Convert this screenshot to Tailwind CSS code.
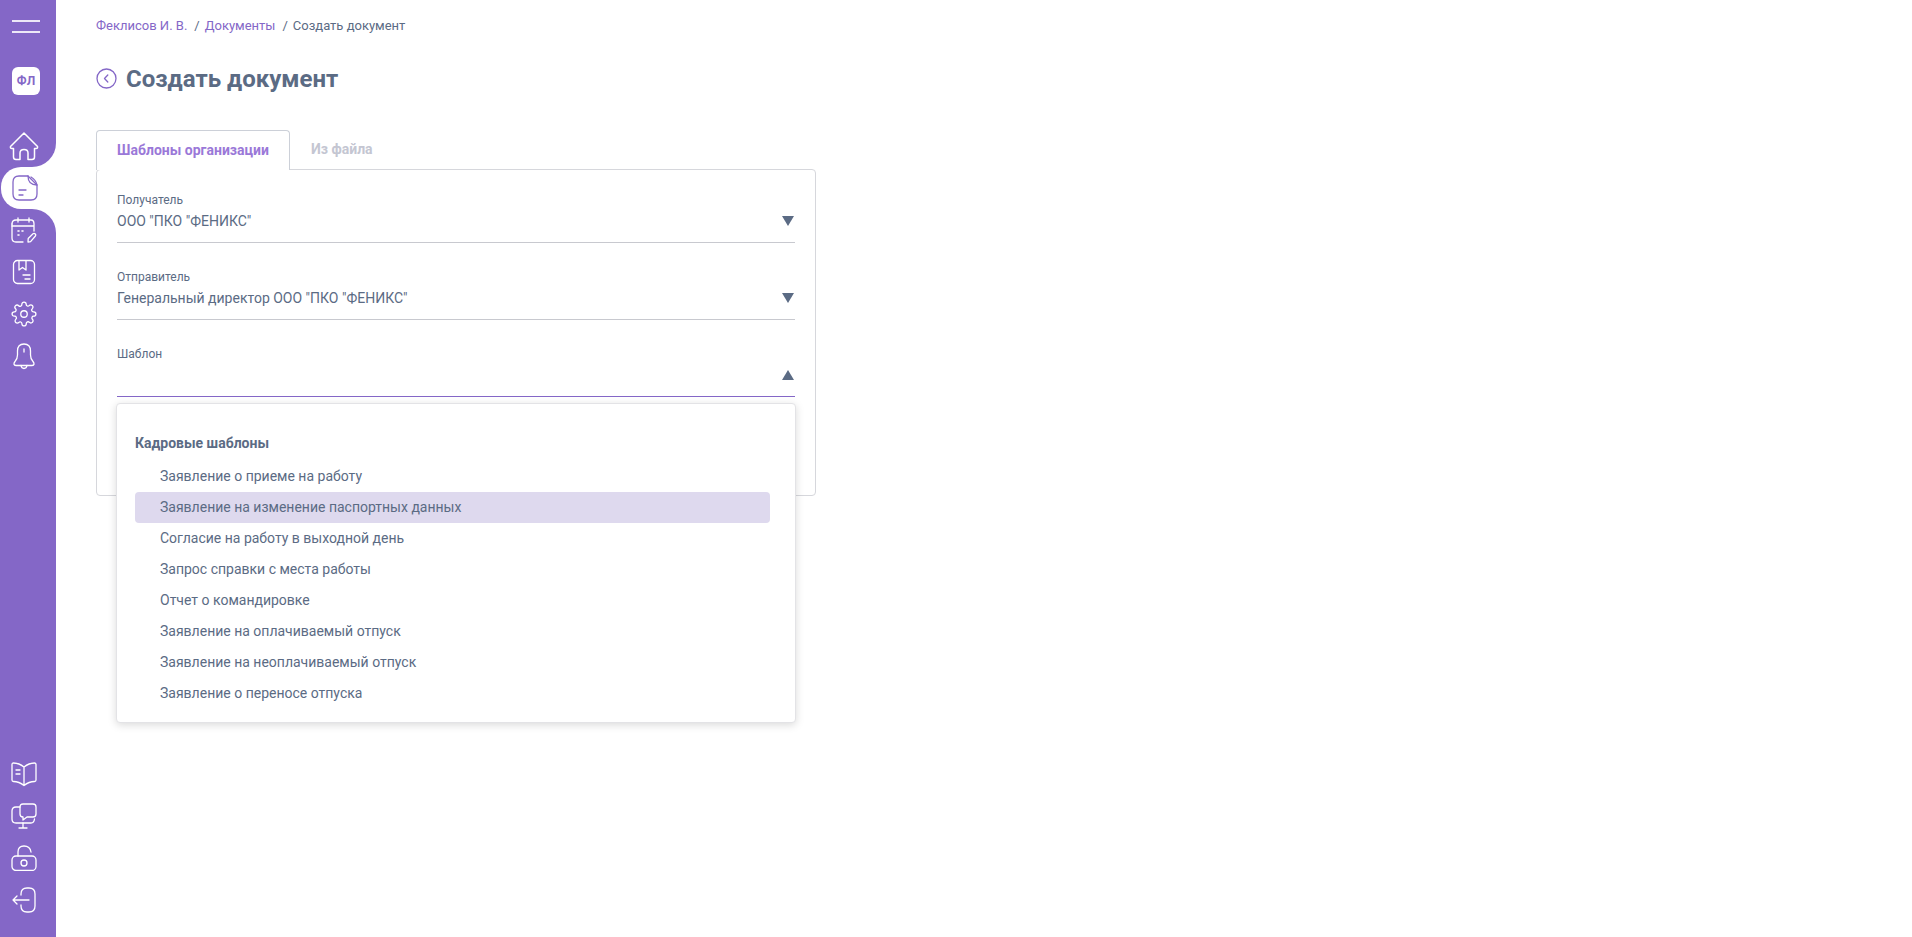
<!DOCTYPE html>
<html lang="ru">

<head>
    <meta charset="UTF-8">
    <meta name="viewport" content="width=device-width, initial-scale=1.0">
    <title>Создать документ</title>
    <script src="https://cdn.jsdelivr.net/npm/@tailwindcss/browser@4"></script>
</head>

<body class="bg-white h-screen overflow-hidden flex font-['Roboto',sans-serif] text-[#5b6b84]">
    <!-- Sidebar -->
    <aside class="w-14 shrink-0 h-full flex flex-col bg-white text-white">
        <div class="bg-[#8467c7] h-[167px] rounded-br-[24px] flex flex-col items-center">
            <button class="mt-5 mr-1 w-7 flex flex-col gap-[9px]">
                <span class="block h-[2px] bg-white/85"></span>
                <span class="block h-[2px] bg-white/85"></span>
            </button>
            <div class="mt-[34px] mr-1 w-7 h-7 rounded-md bg-white text-[#8467c7] text-xs font-bold flex items-center justify-center">ФЛ</div>
            <div class="mt-[30px] mr-2 h-[42px] flex items-center justify-center">
                <svg width="30" height="30" viewBox="0 0 30 30" fill="none" stroke="currentColor" stroke-width="1.5" stroke-linejoin="round" stroke-linecap="round">
                    <path d="M15 2 L1.5 15.5 Q1 17.5 3 17.5 L4.5 17.5 L4.5 26 Q4.5 28.5 7 28.5 L11 28.5 L11 22 Q11 18.5 15 18.5 Q19 18.5 19 22 L19 28.5 L23 28.5 Q25.5 28.5 25.5 26 L25.5 17.5 L27 17.5 Q29 17.5 28.5 15.5 Z" />
                </svg>
            </div>
        </div>
        <div class="bg-[#8467c7] shrink-0">
            <div class="bg-white h-[42px] ml-px pr-[7px] rounded-l-[20px] flex items-center justify-center text-[#8467c7]">
                <svg width="26" height="26" viewBox="0 0 26 26" fill="none" stroke="currentColor" stroke-width="1.3" stroke-linecap="round" stroke-linejoin="round">
                    <path d="M16 1 H7 Q1 1 1 7 V19 Q1 25 7 25 H19 Q25 25 25 19 V10 Z" />
                    <path d="M16 1 Q16 10 25 10 M19 2 Q24 5 25 10" />
                    <path d="M7 15 H14 M7 20 H11" />
                </svg>
            </div>
        </div>
        <div class="bg-[#8467c7] flex-1 rounded-tr-[24px] flex flex-col items-center justify-between pb-4 pr-2">
            <div class="flex flex-col items-center">
                <div class="h-[42px] flex items-center justify-center">
                    <svg width="26" height="26" viewBox="0 0 26 26" fill="none" stroke="currentColor" stroke-width="1.3" stroke-linecap="round" stroke-linejoin="round">
                        <path d="M7 1 V5 M18 1 V5 M1 7 Q1 3 5 3 H20 Q23 3 23 7 V14 M1 9 H23" />
                        <path d="M1 7 V21 Q1 25 5 25 H12" />
                        <path d="M7 14 H8 M11 14 H12 M7 18 H8" stroke-width="1.6" />
                        <path d="M17 25 L17.2 21.5 L22 16.8 Q23.2 16 24.3 17 Q25.2 18.2 24.2 19.3 L19.6 24.6 Z" />
                    </svg>
                </div>
                <div class="h-[42px] flex items-center justify-center">
                    <svg width="24" height="26" viewBox="0 0 24 26" fill="none" stroke="currentColor" stroke-width="1.3" stroke-linecap="round" stroke-linejoin="round">
                        <rect x="1.5" y="1.5" width="21" height="23" rx="4" />
                        <path d="M7 2 V11 L10.5 8.5 L14 11 V2" />
                        <path d="M11 16 H18 M13 20 H18" />
                    </svg>
                </div>
                <div class="h-[42px] flex items-center justify-center">
                    <svg width="26" height="26" viewBox="0 0 24 24" fill="none" stroke="currentColor" stroke-width="1.2" stroke-linecap="round" stroke-linejoin="round">
                        <circle cx="12" cy="12" r="3" />
                        <path d="M19.4 15a1.65 1.65 0 0 0 .33 1.82l.06.06a2 2 0 1 1-2.83 2.83l-.06-.06a1.65 1.65 0 0 0-2.82 1.17V21a2 2 0 1 1-4 0v-.09a1.65 1.65 0 0 0-2.82-1.17l-.06.06a2 2 0 1 1-2.83-2.83l.06-.06A1.65 1.65 0 0 0 3.09 14H3a2 2 0 1 1 0-4h.09a1.65 1.65 0 0 0 1.17-2.82l-.06-.06a2 2 0 1 1 2.83-2.83l.06.06A1.65 1.65 0 0 0 10 3.09V3a2 2 0 1 1 4 0v.09a1.65 1.65 0 0 0 2.82 1.17l.06-.06a2 2 0 1 1 2.83 2.83l-.06.06A1.65 1.65 0 0 0 20.91 10H21a2 2 0 1 1 0 4h-.09a1.65 1.65 0 0 0-1.51 1z" />
                    </svg>
                </div>
                <div class="h-[42px] flex items-center justify-center">
                    <svg width="24" height="28" viewBox="0 0 24 28" fill="none" stroke="currentColor" stroke-width="1.3" stroke-linecap="round" stroke-linejoin="round">
                        <path d="M12 2 Q5.5 2 5.5 9 V13 Q5.5 17 3 19.5 Q0.5 23 4 23.5 H20 Q23.5 23 21 19.5 Q18.5 17 18.5 13 V9 Q18.5 2 12 2 Z" />
                        <path d="M12 7 V10 M9 23.5 Q9.5 26.5 12 26.5 Q14.5 26.5 15 23.5" />
                    </svg>
                </div>
            </div>
            <div class="flex flex-col items-center">
                <div class="h-[42px] flex items-center justify-center">
                    <svg width="26" height="26" viewBox="0 0 26 26" fill="none" stroke="currentColor" stroke-width="1.3" stroke-linecap="round" stroke-linejoin="round">
                        <path d="M13 6 Q8 2 2.5 2 Q1 2 1 3.5 V19 Q1 20.5 2.5 20.5 Q8 20.5 13 24.5 Q18 20.5 23.5 20.5 Q25 20.5 25 19 V3.5 Q25 2 23.5 2 Q18 2 13 6 Z M13 6 V24.5" />
                        <path d="M5 9 H9 M5 13 H9" />
                    </svg>
                </div>
                <div class="h-[42px] flex items-center justify-center">
                    <svg width="26" height="26" viewBox="0 0 26 26" fill="none" stroke="currentColor" stroke-width="1.3" stroke-linecap="round" stroke-linejoin="round">
                        <path d="M9 4 H5 Q1 4 1 8 V16 Q1 20 5 20 H20 Q23 20 23.5 16" />
                        <path d="M12 1 H22 Q25 1 25 4 V11 Q25 14 22 14 H16 L12 17 L12 14 Q9 14 9 11 V4 Q9 1 12 1 Z" />
                        <path d="M12 20 V25 M8 25 H16" />
                    </svg>
                </div>
                <div class="h-[42px] flex items-center justify-center">
                    <svg width="26" height="26" viewBox="0 0 26 26" fill="none" stroke="currentColor" stroke-width="1.3" stroke-linecap="round" stroke-linejoin="round">
                        <rect x="1" y="11" width="24" height="14.5" rx="4" />
                        <path d="M7 11 V7 Q7 1 13 1 Q19 1 20 7" />
                        <circle cx="13" cy="18" r="3" />
                    </svg>
                </div>
                <div class="h-[42px] flex items-center justify-center">
                    <svg width="26" height="26" viewBox="0 0 26 26" fill="none" stroke="currentColor" stroke-width="1.3" stroke-linecap="round" stroke-linejoin="round">
                        <path d="M10 8 V7 Q10 1 16 1 H18 Q24 1 24 7 V19 Q24 25 18 25 H16 Q10 25 10 19 V18" />
                        <path d="M18 13 H2 M2 13 L6 9 M2 13 L6 17" />
                    </svg>
                </div>
            </div>
        </div>
    </aside>

    <!-- Contenu -->
    <main class="flex-1 pl-10">
        <nav class="pt-[18px] h-[34px] text-[13px] leading-4 flex">
            <a class="text-[#8467c7]">Феклисов И. В.</a>
            <span class="ml-[7px] mr-[5px]">/</span>
            <a class="text-[#8467c7]">Документы</a>
            <span class="ml-[7px] mr-[5px]">/</span>
            <span>Создать документ</span>
        </nav>

        <div class="mt-[28px] h-[34px] flex items-center gap-[9px]">
            <svg class="-mt-[2px]" width="21" height="21" viewBox="0 0 21 21" fill="none" stroke="#8467c7" stroke-width="1.3" stroke-linecap="round" stroke-linejoin="round">
                <circle cx="10.5" cy="10.5" r="9.5" />
                <path d="M11.8 7 L8.5 10.5 L11.8 14" />
            </svg>
            <h1 class="text-2xl font-bold leading-8">Создать документ</h1>
        </div>

        <div class="mt-[34px] w-[720px]">
            <div class="flex h-10 -mb-px relative z-10 text-sm font-bold">
                <div class="w-[194px] pb-[2px] bg-white border border-b-0 border-[#ccd0d8] rounded-t-[4px] flex items-center justify-center text-[#9a78d8]">Шаблоны организации</div>
                <div class="pl-[21px] pb-[2px] flex items-center text-[#c4c6d2]">Из файла</div>
            </div>
            <div class="border border-[#d6d7dc] rounded-[4px] h-[327px] px-5 pt-5 pl-5">
                <div class="border-b border-[#c8c9cf] h-[53px] relative">
                    <div class="text-xs leading-[18px] pt-px">Получатель</div>
                    <div class="text-sm leading-5 mt-[2px]">ООО "ПКО "ФЕНИКС"</div>
                    <span class="absolute right-px top-[26px] w-0 h-0 border-x-[6px] border-x-transparent border-t-[10px] border-t-[#5b6b84]"></span>
                </div>
                <div class="border-b border-[#c8c9cf] h-[53px] mt-6 relative">
                    <div class="text-xs leading-[18px] pt-px">Отправитель</div>
                    <div class="text-sm leading-5 mt-[2px]">Генеральный директор ООО "ПКО "ФЕНИКС"</div>
                    <span class="absolute right-px top-[26px] w-0 h-0 border-x-[6px] border-x-transparent border-t-[10px] border-t-[#5b6b84]"></span>
                </div>
                <div class="border-b border-[#8467c7] h-[53px] mt-6 relative">
                    <div class="text-xs leading-[18px] pt-px">Шаблон</div>
                    <span class="absolute right-px top-[26px] w-0 h-0 border-x-[6px] border-x-transparent border-b-[10px] border-b-[#5b6b84]"></span>
                    <!-- Liste déroulante -->
                    <div class="absolute z-20 -left-px -right-px top-[59px] h-[320px] bg-white border border-[#e3e3e6] rounded-[4px] shadow-[0_2px_8px_rgba(0,0,0,0.15)] pt-[29px] pl-[18px] pr-[25px]">
                        <div class="text-sm font-bold leading-5 mb-2">Кадровые шаблоны</div>
                        <div class="h-[31px] pl-[25px] pb-[2px] flex items-center text-sm">Заявление о приеме на работу</div>
                        <div class="h-[31px] pl-[25px] pb-[2px] flex items-center text-sm bg-[#ded9ee] rounded-[4px]">Заявление на изменение паспортных данных</div>
                        <div class="h-[31px] pl-[25px] pb-[2px] flex items-center text-sm">Согласие на работу в выходной день</div>
                        <div class="h-[31px] pl-[25px] pb-[2px] flex items-center text-sm">Запрос справки с места работы</div>
                        <div class="h-[31px] pl-[25px] pb-[2px] flex items-center text-sm">Отчет о командировке</div>
                        <div class="h-[31px] pl-[25px] pb-[2px] flex items-center text-sm">Заявление на оплачиваемый отпуск</div>
                        <div class="h-[31px] pl-[25px] pb-[2px] flex items-center text-sm">Заявление на неоплачиваемый отпуск</div>
                        <div class="h-[31px] pl-[25px] pb-[2px] flex items-center text-sm">Заявление о переносе отпуска</div>
                    </div>
                </div>
            </div>
        </div>
    </main>
</body>

</html>
